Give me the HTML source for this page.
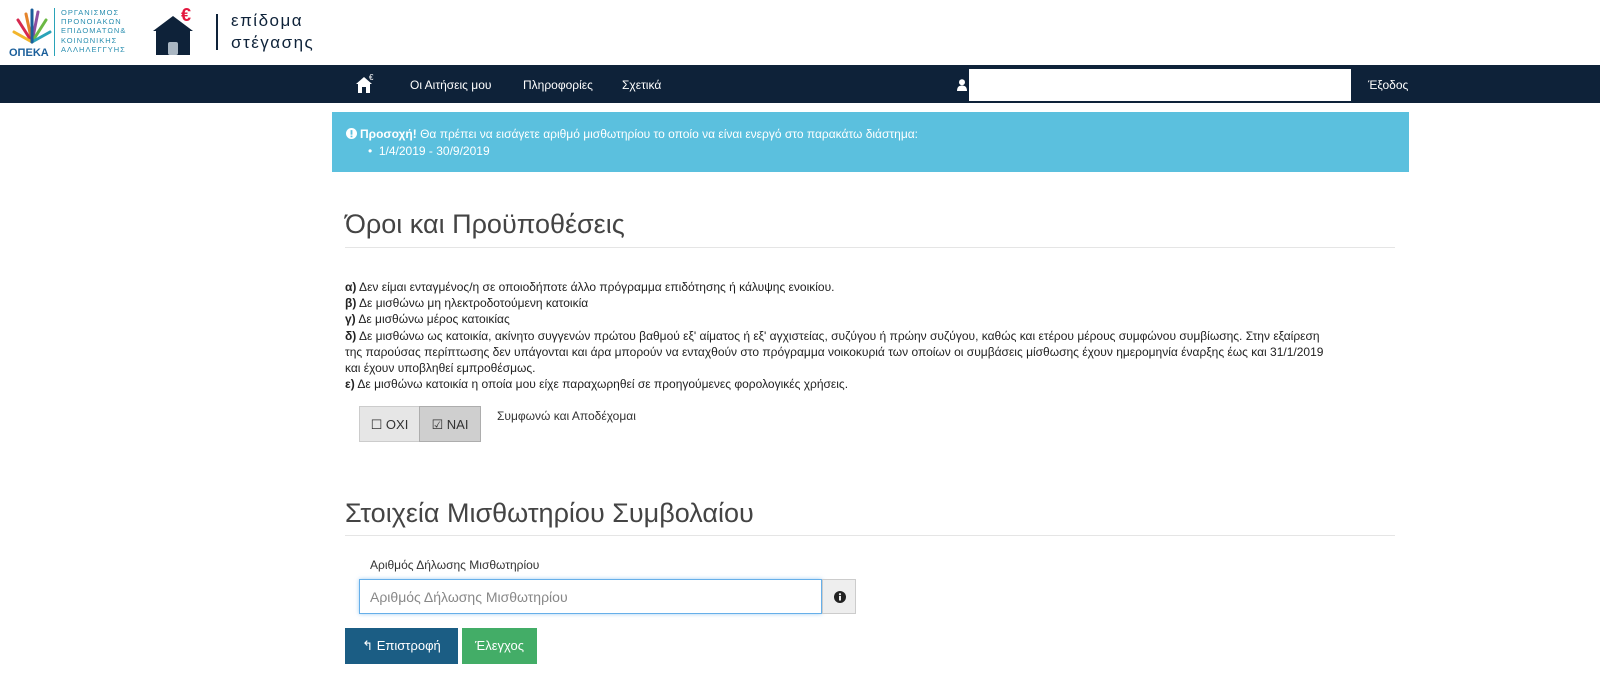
<!DOCTYPE html>
<html><head><meta charset="utf-8"><style>
body{margin:0;width:1600px;height:689px;background:#fff;font-family:"Liberation Sans","DejaVu Sans",sans-serif;color:#333;position:relative;overflow:hidden}
.a{position:absolute}
.nav{left:0;top:65px;width:1600px;height:38px;background:#0e2239}
.nav span{position:absolute;color:#fff;font-size:12px;top:13px}
.alert{left:332px;top:112px;width:1077px;height:60px;background:#5bc0de;color:#fff;font-size:12px}
h2{position:absolute;margin:0;font-weight:300;font-size:27px;color:#444;left:345px}
.hr{position:absolute;left:345px;width:1050px;height:1px;background:#e5e5e5}
.txt{left:345px;top:279px;font-size:12px;line-height:16.2px;width:1000px;color:#222}
.btn{position:absolute;font-size:13px;text-align:center;box-sizing:border-box}
</style></head><body>
<svg class="a" style="left:8px;top:6px" width="48" height="52" viewBox="0 0 48 52">
<g stroke-width="3" fill="none" stroke-linecap="round">
<path d="M24 36 L18 8" stroke="#e5842b"/><path d="M24 36 L30 6" stroke="#8c4fa0"/><path d="M24 36 L10 14" stroke="#d6294f"/><path d="M24 36 L38 14" stroke="#6bb844"/><path d="M24 36 L6 26" stroke="#f2b52b"/><path d="M24 36 L42 26" stroke="#2aa3b8"/><path d="M24 36 L24 4" stroke="#1a5e9a"/></g>
<text x="1" y="50" font-size="11" font-weight="bold" fill="#1a5e9a" font-family="Liberation Sans">ΟΠΕΚΑ</text></svg>
<div class="a" style="left:54px;top:8px;width:1px;height:48px;background:#2aa3b8"></div>
<div class="a" style="left:61px;top:8px;font-size:7.5px;line-height:9.2px;color:#2a8fb0;letter-spacing:1px">ΟΡΓΑΝΙΣΜΟΣ<br>ΠΡΟΝΟΙΑΚΩΝ<br>ΕΠΙΔΟΜΑΤΩΝ&amp;<br>ΚΟΙΝΩΝΙΚΗΣ<br>ΑΛΛΗΛΕΓΓΥΗΣ</div>
<svg class="a" style="left:150px;top:4px" width="50" height="54" viewBox="0 0 50 54"><path d="M3 27 L23 12 L43 27 L40 27 L40 51 L6 51 L6 27Z" fill="#0e2239"/><rect x="18" y="38" width="10" height="13" rx="2" fill="#a9b6c2"/><text x="31" y="17" font-size="18" font-weight="bold" fill="#e3173e" font-family="Liberation Sans">€</text></svg>
<div class="a" style="left:216px;top:14px;width:2px;height:36px;background:#0e2239"></div>
<div class="a" style="left:231px;top:10px;font-size:17px;line-height:22px;color:#0e2239;letter-spacing:1.5px">επίδομα<br>στέγασης</div>
<div class="a nav">
<svg class="a" style="left:355px;top:8px" width="22" height="22" viewBox="0 0 22 22"><path d="M1 11 L9 4 L17 11 L15 11 L15 20 L3 20 L3 11Z" fill="#fff"/><rect x="7" y="14" width="4" height="6" fill="#0e2239"/><text x="14" y="7" font-size="8" fill="#fff" font-family="Liberation Sans">€</text></svg>
<span style="left:410px">Οι Αιτήσεις μου</span><span style="left:523px">Πληροφορίες</span><span style="left:622px">Σχετικά</span>
<svg class="a" style="left:957px;top:14px" width="10" height="12" viewBox="0 0 10 12"><circle cx="5" cy="3.2" r="3" fill="#fff"/><path d="M0 12 Q0 6.5 5 6.5 Q10 6.5 10 12Z" fill="#fff"/></svg>
<div class="a" style="left:969px;top:4px;width:382px;height:32px;background:#fff"></div>
<span style="left:1368px">Έξοδος</span></div>
<div class="a alert"><svg class="a" style="left:14px;top:16px" width="11" height="11" viewBox="0 0 12 12"><circle cx="6" cy="6" r="6" fill="#fff"/><rect x="5" y="2.3" width="2" height="5" fill="#5bc0de"/><rect x="5" y="8.3" width="2" height="1.8" fill="#5bc0de"/></svg><div class="a" style="left:28px;top:15px"><b>Προσοχή!</b> Θα πρέπει να εισάγετε αριθμό μισθωτηρίου το οποίο να είναι ενεργό στο παρακάτω διάστημα:</div>
<div class="a" style="left:36px;top:32px">•&nbsp;&nbsp;1/4/2019 - 30/9/2019</div></div>
<h2 style="top:209px">Όροι και Προϋποθέσεις</h2><div class="hr" style="top:247px"></div>
<div class="a txt"><b>α)</b> Δεν είμαι ενταγμένος/η σε οποιοδήποτε άλλο πρόγραμμα επιδότησης ή κάλυψης ενοικίου.<br><b>β)</b> Δε μισθώνω μη ηλεκτροδοτούμενη κατοικία<br><b>γ)</b> Δε μισθώνω μέρος κατοικίας<br><b>δ)</b> Δε μισθώνω ως κατοικία, ακίνητο συγγενών πρώτου βαθμού εξ' αίματος ή εξ' αγχιστείας, συζύγου ή πρώην συζύγου, καθώς και ετέρου μέρους συμφώνου συμβίωσης. Στην εξαίρεση<br>της παρούσας περίπτωσης δεν υπάγονται και άρα μπορούν να ενταχθούν στο πρόγραμμα νοικοκυριά των οποίων οι συμβάσεις μίσθωσης έχουν ημερομηνία έναρξης έως και 31/1/2019<br>και έχουν υποβληθεί εμπροθέσμως.<br><b>ε)</b> Δε μισθώνω κατοικία η οποία μου είχε παραχωρηθεί σε προηγούμενες φορολογικές χρήσεις.</div>
<div class="btn" style="left:359px;top:406px;width:61px;height:36px;background:#e6e6e6;border:1px solid #ccc;padding-top:10px">☐ ΟΧΙ</div>
<div class="btn" style="left:419px;top:406px;width:62px;height:36px;background:#cfcfcf;border:1px solid #adadad;padding-top:10px">☑ ΝΑΙ</div>
<div class="a" style="left:497px;top:409px;font-size:12px">Συμφωνώ και Αποδέχομαι</div>
<h2 style="top:498px">Στοιχεία Μισθωτηρίου Συμβολαίου</h2><div class="hr" style="top:535px"></div>
<div class="a" style="left:370px;top:558px;font-size:12px">Αριθμός Δήλωσης Μισθωτηρίου</div>
<div class="a" style="left:359px;top:579px;width:463px;height:35px;box-sizing:border-box;border:1px solid #66afe9;box-shadow:0 0 4px rgba(102,175,233,.6);font-size:14px;color:#888;padding:9px 10px">Αριθμός Δήλωσης Μισθωτηρίου</div>
<div class="a" style="left:822px;top:579px;width:34px;height:35px;box-sizing:border-box;background:#eee;border:1px solid #ccc"><svg class="a" style="left:11px;top:11px" width="12" height="12" viewBox="0 0 12 12"><circle cx="6" cy="6" r="6" fill="#222"/><rect x="5" y="5" width="2" height="4.5" fill="#eee"/><circle cx="6" cy="3.2" r="1.1" fill="#eee"/></svg></div>
<div class="btn" style="left:345px;top:628px;width:113px;height:36px;background:#1b5d84;color:#fff;padding-top:10px">↰ Επιστροφή</div>
<div class="btn" style="left:462px;top:628px;width:75px;height:36px;background:#43ad67;color:#fff;padding-top:10px">Έλεγχος</div>
</body></html>
